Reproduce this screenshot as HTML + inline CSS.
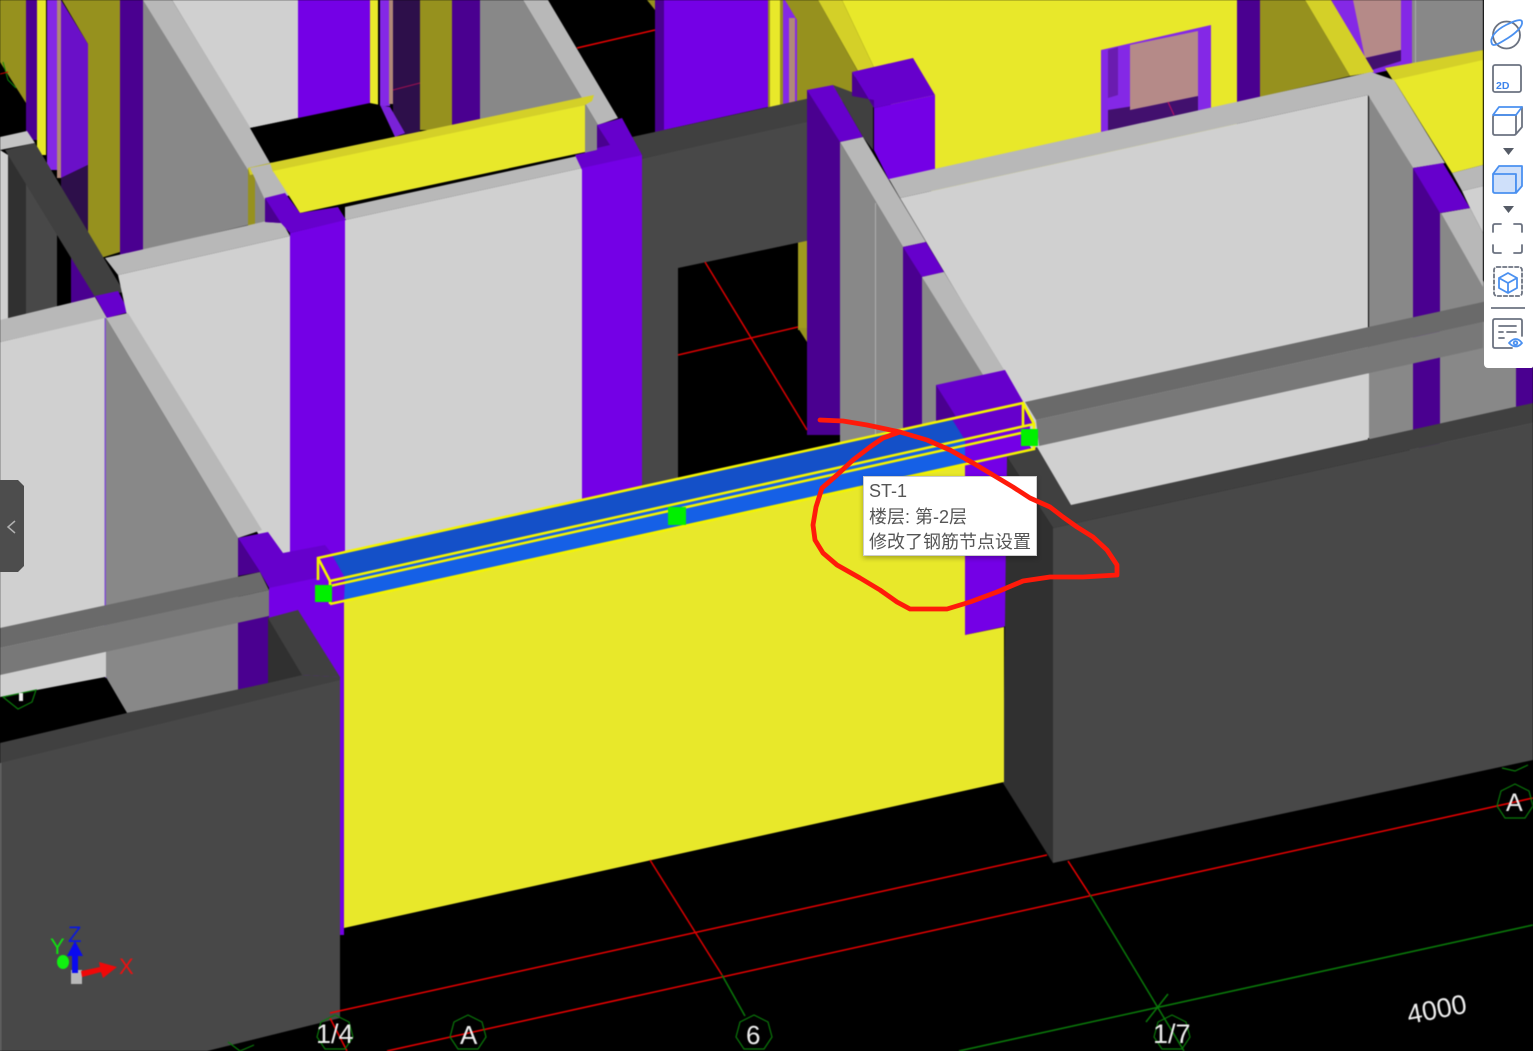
<!DOCTYPE html>
<html><head><meta charset="utf-8"><style>
html,body{margin:0;padding:0;background:#000;width:1533px;height:1051px;overflow:hidden}
#s{position:absolute;left:0;top:0;filter:blur(.4px)}
#t{position:absolute;left:863px;top:476px;width:172px;height:78px;background:#fff;border:1px solid #ccc;box-shadow:0 2px 5px rgba(0,0,0,.3);font:18px/25.5px "Liberation Sans","Noto Sans CJK SC",sans-serif;color:#555;padding:0;white-space:nowrap}
#t div{margin-left:5px}
#t div:first-child{margin-top:2px}
#r{position:absolute;left:0;top:0}
#b{position:absolute;left:1484px;top:0;width:49px;height:368px;background:#fff;border-radius:0 0 2px 4px}
#i{position:absolute;left:0;top:0}
#p{position:absolute;left:0;top:480px;width:24px;height:92px;background:#4d4d4d;clip-path:polygon(0 0,18px 0,24px 6px,24px 86px,18px 92px,0 92px)}
</style></head><body>
<svg id="s" width="1533" height="1051" viewBox="0 0 1533 1051" font-family="Liberation Sans, sans-serif">
<rect width="1533" height="1051" fill="#000"/>
<!-- top-left back -->
<polygon points="0,0 26,0 26,103 0,62" fill="#96911e"/>
<polyline points="3,62 8,80 16,88" fill="none" stroke="#0a8a0a"/><line x1="0" y1="74" x2="8" y2="72" stroke="#c00"/>
<rect x="26" y="0" width="12" height="140" fill="#4a0090"/>
<rect x="37" y="0" width="9" height="155" fill="#e8e82a"/>
<rect x="47" y="0" width="10" height="170" fill="#8428e6"/>
<rect x="57" y="0" width="4" height="178" fill="#b08878"/>
<polygon points="61,0 88,44 88,165 61,178" fill="#6a10c8"/>
<polygon points="61,178 88,165 88,240 61,200" fill="#2d0f4a"/>
<polygon points="62,0 120,0 120,252 88,262 88,44" fill="#96911e"/>
<rect x="120" y="0" width="23" height="256" fill="#4a0090"/>
<polygon points="143,0 160,0 260,168 248,225 143,250" fill="#888"/>
<polygon points="172,0 298,0 298,118 250,128" fill="#d0d0d0"/>
<polygon points="143,0 172,0 272,163 248,170" fill="#b8b8b8"/>
<rect x="298" y="0" width="72" height="118" fill="#7400e6"/>
<rect x="370" y="0" width="8" height="108" fill="#e8e82a"/>
<rect x="378" y="0" width="2" height="108" fill="#000"/>
<rect x="380" y="0" width="10" height="106" fill="#8428e6"/>
<rect x="389" y="0" width="4" height="104" fill="#b08878"/>
<rect x="393" y="0" width="27" height="135" fill="#2d0f4a"/>
<line x1="393" y1="90" x2="420" y2="83" stroke="#a01050"/>
<rect x="420" y="0" width="32" height="130" fill="#96911e"/>
<rect x="452" y="0" width="28" height="125" fill="#4a0090"/>
<polygon points="480,0 523,0 598,125 597,150 480,170" fill="#888"/>
<polygon points="250,128 370,103 380,105 394,135 270,163" fill="#000"/>
<polygon points="380,105 390,107 405,133 395,137" fill="#7a22d8"/>
<polygon points="548,0 655,0 655,135 632,137 618,118" fill="#000"/>
<line x1="577" y1="48" x2="655" y2="30" stroke="#e00" stroke-width="1.5"/>
<polygon points="647,0 655,0 655,10" fill="#96911e"/>
<polygon points="523,0 548,0 618,118 598,125" fill="#b8b8b8"/>
<!-- yellow beam top-left -->
<polygon points="248,168 270,163 272,170 255,172 255,225 248,228" fill="#96911e"/>
<polygon points="248,168 272,163 275,170 250,175" fill="#d4d028"/>
<polygon points="255,172 272,168 290,195 265,200 265,222 255,225" fill="#888"/>
<polygon points="250,168 274,163 292,195 265,200" fill="#b8b8b8"/>
<polygon points="270,163 594,95 592,101 585,105 273,172" fill="#d4d028"/>
<polygon points="273,171 585,105 585,152 300,213" fill="#e8e82a"/>
<polygon points="585,105 597,125 597,150 585,153" fill="#888"/>
<!-- center top -->
<rect x="655" y="0" width="9" height="135" fill="#4a0090"/>
<polygon points="664,0 768,0 768,107 664,130" fill="#7400e6"/>
<rect x="768" y="0" width="2" height="110" fill="#96911e"/>
<rect x="770" y="0" width="10" height="108" fill="#e8e82a"/>
<rect x="780" y="0" width="3" height="108" fill="#96911e"/>
<rect x="783" y="0" width="14" height="108" fill="#8428e6"/>
<rect x="789" y="18" width="6" height="90" fill="#b08878"/>
<polygon points="785,0 818,0 860,75 852,78 852,100 797,108 797,20" fill="#96911e"/>
<!-- far yellow -->
<polygon points="842,0 1237,0 1237,140 935,200 880,80" fill="#e8e82a"/>
<polygon points="818,0 842,0 880,80 863,80" fill="#d4d028"/>
<!-- window -->
<polygon points="1101,50 1211,25 1211,112 1101,136" fill="#8428e6"/>
<polygon points="1108,50 1118,47 1118,95 1108,98" fill="#6a1cb0"/>
<polygon points="1108,110 1198,96 1198,115 1108,135" fill="#42106e"/>
<polygon points="1130,45 1198,31 1198,96 1130,110" fill="#b58a88"/>
<line x1="1168" y1="102" x2="1174" y2="115" stroke="#c01060" stroke-width="1"/>
<rect x="1237" y="0" width="23" height="105" fill="#4a0090"/>
<polygon points="1260,0 1305,0 1350,76 1260,97" fill="#96911e"/>
<polygon points="1331,0 1412,0 1412,65 1372,74" fill="#8428e6"/>
<polygon points="1353,0 1401,0 1401,50 1365,58" fill="#b58a88"/>
<polygon points="1365,58 1401,50 1401,61 1372,70" fill="#42106e"/>
<polygon points="1412,0 1483,0 1483,50 1412,66" fill="#888"/>
<rect x="1415" y="0" width="1" height="65" fill="#aaa"/>
<polygon points="1305,0 1331,0 1374,72 1350,76" fill="#d4d028"/>
<!-- far right yellow -->
<polygon points="1385,68 1483,50 1483,62 1394,82" fill="#d4d028"/>
<polygon points="1394,80 1483,60 1483,165 1452,173" fill="#e8e82a"/>
<!-- dark back wall -->
<rect x="798" y="235" width="10" height="95" fill="#a09a1e"/>
<polygon points="798,328 807,342 807,328" fill="#96911e"/>
<polygon points="632,137 815,97 830,118 640,159" fill="#404040"/>
<polygon points="640,159 825,118 825,237 678,268 678,500 640,510" fill="#484848"/>
<rect x="807" y="90" width="33" height="345" fill="#4a0090"/>
<polygon points="807,90 833,85 863,137 840,142" fill="#6600cc"/>
<line x1="705" y1="262" x2="807" y2="430" stroke="#d00" stroke-width="1.5"/>
<line x1="678" y1="355" x2="798" y2="327" stroke="#d00" stroke-width="1.5"/>
<polygon points="833,85 873,100 873,150 863,137" fill="#404040"/>
<polygon points="852,72 913,58 935,95 874,108" fill="#6600cc"/>
<polygon points="852,72 874,108 874,100 852,96" fill="#4a0090"/>
<polygon points="874,108 935,95 935,170 889,180 874,150" fill="#7400e6"/>
<!-- gray column + main right wall -->
<polygon points="840,142 876,202 903,247 903,450 840,450" fill="#888"/>
<rect x="875" y="203" width="1" height="235" fill="#b0b0b0"/>
<polygon points="840,142 863,137 926,242 903,247 876,202" fill="#b8b8b8"/>
<polygon points="900,198 1368,95 1368,440 1060,510 961,300" fill="#d0d0d0"/>
<polygon points="889,179 1371,72 1394,82 1368,95 900,198" fill="#b8b8b8"/>
<rect x="903" y="247" width="19" height="200" fill="#4a0090"/>
<polygon points="903,247 926,242 944,272 922,277" fill="#6600cc"/>
<polygon points="922,277 944,272 1010,380 1010,440 922,440" fill="#888"/>
<polygon points="922,277 944,272 1005,372 985,378" fill="#b8b8b8"/>
<polygon points="936,385 1005,370 1025,405 1025,450 936,460" fill="#6600cc"/>
<polygon points="936,385 958,420 936,425" fill="#4a0090"/>
<polygon points="965,438 1030,424 1030,450 1007,457 1007,626 965,635" fill="#7400e6"/>
<!-- right side -->
<polygon points="1369,95 1413,168 1441,213 1533,360 1533,450 1369,450" fill="#888"/>
<polygon points="1371,72 1394,80 1445,163 1413,168 1368,95" fill="#b8b8b8"/>
<polygon points="1452,173 1483,165 1483,186 1462,191" fill="#b8b8b8"/>
<polygon points="1462,191 1483,186 1483,233 1470,208" fill="#d0d0d0"/>
<polygon points="1441,213 1470,208 1483,233 1483,287" fill="#b8b8b8"/>
<rect x="1413" y="168" width="27" height="280" fill="#4a0090"/>
<polygon points="1413,168 1443,163 1470,208 1440,213" fill="#6600cc"/>
<rect x="1516" y="360" width="17" height="50" fill="#4a0090"/>
<polygon points="1037,447 1369,373 1369,438 1071,505" fill="#d0d0d0"/>
<polygon points="1025,402 1483,302 1533,292 1533,312 1483,322 1036,420" fill="#6a6a6a"/>
<polygon points="1036,420 1483,322 1483,348 1039,446" fill="#787878"/>
<!-- right dark block -->
<polygon points="1007,457 1037,447 1071,505 1533,403 1533,423 1053,528" fill="#404040"/>
<polygon points="1053,528 1533,423 1533,760 1053,863" fill="#484848"/>
<polygon points="1007,457 1053,528 1053,863 1003,783" fill="#303030"/>
<!-- left column area: center wall -->
<polygon points="0,137 27,131 35,143 0,150" fill="#c4c4c4"/>
<polygon points="0,150 8,155 8,340 0,340" fill="#d0d0d0"/>
<polygon points="8,155 26,155 26,315 8,318" fill="#303030"/>
<polygon points="26,180 57,230 57,310 26,315" fill="#484848"/>
<polygon points="57,235 71,250 71,305 57,308" fill="#000"/>
<polygon points="71,255 95,290 95,298 71,305" fill="#4a0090"/>
<polygon points="5,150 35,143 124,292 95,297" fill="#404040"/>
<polygon points="0,320 95,297 107,318 0,342" fill="#b8b8b8"/>
<polygon points="0,342 105,318 105,700 0,700" fill="#d0d0d0"/>
<polygon points="95,296 118,291 129,312 107,318" fill="#6600cc"/>
<polygon points="105,258 280,218 290,236 118,275" fill="#b8b8b8"/>
<polygon points="118,275 290,236 290,570 262,540 128,320" fill="#d0d0d0"/>
<polygon points="345,207 582,155 582,168 345,220" fill="#b8b8b8"/>
<polygon points="345,220 582,168 582,520 345,600" fill="#d0d0d0"/>
<polygon points="265,198 285,193 300,213 338,207 346,220 290,233 281,223 265,222" fill="#6600cc"/>
<polygon points="265,198 281,223 265,222" fill="#4a0090"/>
<polygon points="290,233 345,220 345,580 290,590" fill="#7400e6"/>
<polygon points="575,155 597,150 597,125 622,118 642,155 582,170" fill="#6600cc"/>
<polygon points="597,125 610,145 597,148" fill="#4a0090"/>
<polygon points="582,168 642,155 642,510 582,520" fill="#7400e6"/>
<rect x="104.500" y="318" width="2" height="360" fill="#8050d0"/>
<polygon points="106,318 238,538 238,640 106,660" fill="#888"/>
<polygon points="106,318 128,313 262,530 238,538" fill="#b8b8b8"/>
<polygon points="0,645 106,630 106,677 0,697" fill="#d0d0d0"/>
<polygon points="106,620 238,600 238,690 127,713 106,677" fill="#888"/>
<polygon points="0,697 105,677 127,713 0,743" fill="#000"/>
<polygon points="3,697 18,709 32,702 36,690" fill="none" stroke="#0a7a0a" stroke-width="1.2"/>
<rect x="19" y="693" width="4" height="8" fill="#eee"/>
<!-- left purple joint -->
<polygon points="238,538 268,532 283,553 325,545 345,570 345,695 344,935 340,935 340,690 269,620 269,588 260,572" fill="#6600cc"/>
<polygon points="238,538 260,572 238,576" fill="#4a0090"/>
<polygon points="269,588 345,572 345,690 340,935 344,935 344,690 340,690 302,675 269,618" fill="#7400e6"/>
<polygon points="238,622 269,616 269,683 238,690" fill="#4a0090"/>
<polygon points="0,628 260,572 269,590 0,648" fill="#6a6a6a"/>
<polygon points="0,648 269,590 269,616 0,675" fill="#787878"/>
<!-- left dark block -->
<polygon points="268,618 298,610 340,677 302,675 268,683" fill="#404040"/>
<polygon points="268,618 302,675 268,683" fill="#303030"/>
<polygon points="0,743 127,713 268,683 302,675 340,677 340,690 0,765" fill="#404040"/>
<polygon points="0,763 340,680 340,1018 207,1051 0,1051" fill="#484848"/>
<rect x="0" y="763" width="1" height="288" fill="#888"/>
<rect x="340" y="680" width="4" height="255" fill="#7400e6"/>
<!-- yellow wall -->
<polygon points="344,600 965,463 965,635 1004,627 1004,782 344,928" fill="#e8e82a"/>
<!-- blue beam -->
<polygon points="332,555 952,419 965,440 345,578" fill="#1450c8"/>
<polygon points="344,578 965,440 965,463 344,600" fill="#1560e6"/>
<polygon points="318,558 332,555 345,578 344,602 330,604 318,580" fill="#7400e6"/>
<polygon points="952,419 1023,403 1034,425 965,440" fill="#6600cc"/>
<g fill="none" stroke="#f4f400" stroke-width="2.600">
<polyline points="318,580 318,558 1023,403 1034,424 1034,449 330,604"/>
<polyline points="318,558 330,581 1034,424"/>
<polyline points="330,586 1030,431"/>
<line x1="330" y1="581" x2="330" y2="604"/>
<line x1="1023" y1="403" x2="1023" y2="426"/>
</g>
<rect x="315" y="585" width="17" height="17" fill="#00f000"/>
<rect x="668" y="507" width="18" height="18" fill="#00f000"/>
<rect x="1021" y="429" width="17" height="17" fill="#00f000"/>
<!-- grid -->
<g fill="none" stroke-width="1.5">
<line x1="330" y1="1013" x2="1047" y2="855" stroke="#e00"/>
<line x1="387" y1="1051" x2="1533" y2="798" stroke="#e00"/>
<line x1="650" y1="860" x2="722" y2="975" stroke="#d00"/>
<line x1="1068" y1="861" x2="1090" y2="895" stroke="#e00"/>
<line x1="722" y1="975" x2="745" y2="1016" stroke="#0a7a0a"/>
<line x1="1090" y1="895" x2="1184" y2="1051" stroke="#0a7a0a"/>
<line x1="959" y1="1051" x2="1533" y2="925" stroke="#0a7a0a"/>
<line x1="1146" y1="1022" x2="1168" y2="994" stroke="#0a7a0a"/>
<line x1="330" y1="1018" x2="347" y2="1051" stroke="#e00"/>
<g stroke="#0a7a0a" stroke-width="1.2">
<polygon points="335,1015 349,1022 353,1037 345,1049 325,1049 317,1037 321,1022"/>
<polygon points="468,1015 482,1022 486,1037 478,1049 458,1049 450,1037 454,1022"/>
<polygon points="754,1015 768,1022 772,1037 764,1049 744,1049 736,1037 740,1022"/>
<polygon points="1172,1015 1186,1022 1190,1037 1182,1049 1162,1049 1154,1037 1158,1022"/>
<polygon points="1515,784 1529,791 1533,806 1525,818 1505,818 1497,806 1501,791"/>
<polyline points="1502,768 1515,771 1528,765"/>
<polyline points="228,1042 240,1051 254,1045"/>
</g>
</g>
<g fill="#eee" font-size="27">
<text x="316" y="1043">1/4</text>
<text x="460" y="1044" font-size="26">A</text>
<text x="746" y="1044" font-size="26">6</text>
<text x="1153" y="1043">1/7</text>
<text x="1506" y="811" font-size="25">A</text>
<text x="0" y="0" font-size="27" transform="translate(1409,1024) rotate(-11)">4000</text>
</g>
<!-- gizmo -->
<text x="68" y="942" fill="#0a18e0" font-size="22">Z</text>
<text x="50" y="954" fill="#10e010" font-size="22">Y</text>
<text x="119" y="974" fill="#ee1010" font-size="22">X</text>
<ellipse cx="63" cy="962" rx="6" ry="7" fill="#10f010"/>
<rect x="71" y="970" width="11" height="14" fill="#b8b8b8"/>
<polygon points="81,971 100,967 99,962 117,967 103,978 101,972 82,977" fill="#f00808"/>
<polygon points="75,941 83,956 78,956 78,973 72,973 72,956 67,956" fill="#0a0af0"/>
</svg>
<div id="p"><svg width="24" height="92"><polyline points="15,41 8,47 15,53" fill="none" stroke="#b0b0b0" stroke-width="1.5"/></svg></div>
<div id="t"><div>ST-1</div><div>楼层: 第-2层</div><div>修改了钢筋节点设置</div></div>
<svg id="r" width="1533" height="1051"><path d="M820 420L843 421L867 425L900 432L927 440L950 450L973 463L993 475L1013 487L1030 498L1050 507L1063 517L1077 527L1093 537L1107 550L1117 565L1117 575L1083 577L1050 577L1023 581L997 592L970 602L947 609L910 609L897 602L880 590L860 578L837 565L823 553L815 540L813 525L816 507L822 488L837 475L853 460L870 447L883 438L900 432" fill="none" stroke="#ff1a0a" stroke-width="4.800" stroke-linejoin="round" stroke-linecap="round"/></svg>
<div id="b"></div>
<svg id="i" width="1533" height="1051" fill="none" stroke-linejoin="round" stroke-linecap="round">
<g stroke="#6b7280" stroke-width="1.800">
<circle cx="1506.500" cy="35" r="13.500"/>
<rect x="1493" y="65" width="28" height="27" rx="2"/>
<path d="M1516 115H1495Q1493 115 1493 117V133Q1493 135 1495 135H1514Q1516 135 1516 133ZM1522 107V127L1516 134"/>
<path d="M1493 232V226Q1493 224 1495 224H1501M1514 224H1520Q1522 224 1522 226V232M1493 245V251Q1493 253 1495 253H1501M1514 253H1520Q1522 253 1522 251V245"/>
<rect x="1494" y="267" width="28" height="29" rx="3" stroke-dasharray="3.500 2.500"/>
<path d="M1491 308H1525" stroke-linecap="butt"/>
<path d="M1512 348H1495Q1493 348 1493 346V321Q1493 319 1495 319H1520Q1522 319 1522 321V336M1499 326H1516M1499 332H1503M1507 332H1516M1499 338H1504"/>
</g>
<g stroke="#4a90f0" stroke-width="1.800">
<path d="M1492 44C1489 38 1496 30 1506 25C1514 21 1522 18 1522 22C1523 26 1516 33 1508 38C1500 43 1494 47 1492 44Z"/>
<path d="M1493 115L1499 107H1522L1516 115Z"/>
<path d="M1495 173H1514Q1516 173 1516 175V191Q1516 193 1514 193H1495Q1493 193 1493 191V175Q1493 173 1495 173Z" fill="#cfe0fa"/>
<path d="M1493 174L1499 166H1522V186L1516 193V174Z" fill="#cfe0fa"/>
<path d="M1508 273L1517 278V288L1508 293L1499 288V278ZM1499 278L1508 283L1517 278M1508 283V293"/>
<path d="M1509 343Q1516 335 1522 343Q1516 350 1509 343Z"/>
<circle cx="1515.500" cy="343" r="1.800"/>
</g>
<text x="1496" y="89" fill="#3d84ec" font-family="Liberation Sans, sans-serif" font-weight="700" font-size="10.500">2D</text>
<g fill="#555b66"><polygon points="1503,148 1514,148 1508.500,155"/><polygon points="1503,206 1514,206 1508.500,213"/></g>
</svg>
</body></html>
